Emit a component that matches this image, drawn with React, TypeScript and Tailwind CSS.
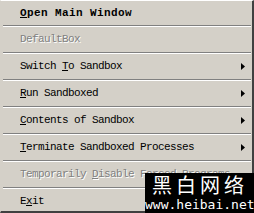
import React from "react";

type Item = {
  label: React.ReactNode;
  bold?: boolean;
  disabled?: boolean;
  arrow?: boolean;
};

const U = ({ children }: { children: React.ReactNode }) => (
  <span className="underline underline-offset-[1px] decoration-1">{children}</span>
);

const items: Item[] = [
  { label: <><U>O</U>pen Main Window</>, bold: true },
  { label: <>DefaultBox</>, disabled: true },
  { label: <>Switch <U>T</U>o Sandbox</>, arrow: true },
  { label: <><U>R</U>un Sandboxed</>, arrow: true },
  { label: <><U>C</U>ontents of Sandbox</>, arrow: true },
  { label: <><U>T</U>erminate Sandboxed Processes</>, arrow: true },
  { label: <>Temporarily <U>D</U>isable Forced Programs</>, disabled: true },
  { label: <>E<U>x</U>it</> },
];

const Arrow = () => (
  <svg width="4" height="7" viewBox="0 0 4 7" className="block shrink-0">
    <polygon points="0,0 4,3.5 0,7" fill="#000" />
  </svg>
);

export default function App() {
  return (
    <div className="relative w-[254px] h-[213px] overflow-hidden bg-[#d4d0c8] font-['Liberation_Mono',monospace]">
      <div className="absolute inset-0 border-t border-l border-r-2 border-b-2 border-t-[#ffffff] border-l-[#d4d0c8] border-r-[#404040] border-b-[#404040] pointer-events-none z-10" />
      <div className="absolute inset-0 border-l border-r border-l-[#ffffff] border-r-[#808080] pointer-events-none" />
      <div className="flex flex-col pt-[1px] pl-[2px] pr-[2px]">
        {items.map((it, i) => (
          <React.Fragment key={i}>
            {i > 0 && (
              <div className="ml-[1px] mr-[1px] h-[2px] flex flex-col">
                <div className="h-[1px] bg-[#808080]" />
                <div className="h-[1px] bg-[#ffffff]" />
              </div>
            )}
            <div
              className={`flex items-center justify-between shrink-0 pl-[18px] pr-[7px] ${
                i === 0 ? "h-[24px]" : "h-[25px]"
              }`}
            >
              <span
                className={`whitespace-nowrap text-[11px] leading-none ${
                  it.bold
                    ? "font-bold tracking-[0.4px] text-black"
                    : "tracking-[-0.6px]"
                } ${
                  it.disabled
                    ? "text-[#808080] [text-shadow:1px_1px_0_#ffffff]"
                    : "text-black"
                }`}
              >
                {it.label}
              </span>
              {it.arrow && <Arrow />}
            </div>
          </React.Fragment>
        ))}
      </div>
      <div className="absolute right-0 bottom-0 w-[109px] h-[40px] bg-black z-20 flex flex-col items-start">
        <div className="pl-[7px] pt-[1px] text-white text-[20px] leading-[22px] tracking-[4px] font-['Noto_Sans_CJK_SC',sans-serif] whitespace-nowrap">
          黑白网络
        </div>
        <div className="mt-[2px] text-white text-[13px] leading-[13px] font-['DejaVu_Sans_Mono',monospace] whitespace-nowrap">
          www.heibai.net
        </div>
      </div>
    </div>
  );
}
